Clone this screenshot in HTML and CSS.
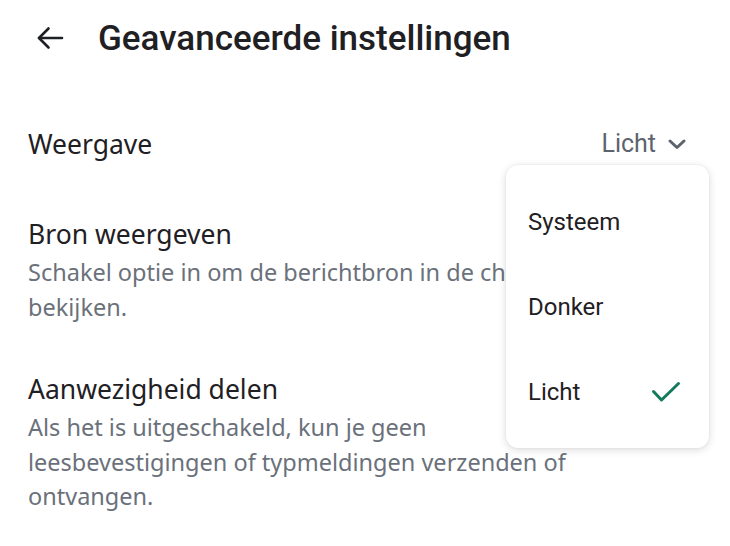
FILE: index.html
```html
<!DOCTYPE html>
<html lang="nl">
<head>
<meta charset="utf-8">
<title>Geavanceerde instellingen</title>
<link rel="stylesheet" href="styles.css">
</head>
<body>
<div class="screen">
  <header class="topbar">
    <button class="back" aria-label="Terug">
      <svg width="28" height="24" viewBox="0 0 28 24" fill="none" stroke="#1f2024" stroke-width="2.6" stroke-linecap="round" stroke-linejoin="round">
        <path d="M26 12H3"/>
        <path d="M12.5 2.5L3 12l9.5 9.5"/>
      </svg>
    </button>
    <h1 class="title">Geavanceerde instellingen</h1>
  </header>

  <main class="list">
    <div class="row row-select">
      <div class="row-title">Weergave</div>
      <div class="select">
        <span>Licht</span>
        <svg width="20" height="14" viewBox="0 0 20 14" fill="none" stroke="#5c636d" stroke-width="3" stroke-linecap="round" stroke-linejoin="round">
          <path d="M3 4l7 6.5L17 4"/>
        </svg>
      </div>
    </div>

    <div class="row">
      <div class="row-title">Bron weergeven</div>
      <div class="row-desc">Schakel optie in om de berichtbron in de chat te bekijken.</div>
    </div>

    <div class="row">
      <div class="row-title">Aanwezigheid delen</div>
      <div class="row-desc">Als het is uitgeschakeld, kun je geen leesbevestigingen of typmeldingen verzenden of ontvangen.</div>
    </div>
  </main>

  <div class="menu" role="menu">
    <div class="menu-item">Systeem</div>
    <div class="menu-item">Donker</div>
    <div class="menu-item">
      <span>Licht</span>
      <svg width="30" height="22" viewBox="0 0 30 22" fill="none" stroke="#137a5c" stroke-width="3" stroke-linecap="round" stroke-linejoin="round">
        <path d="M2.5 10.5l8 8.5L27.5 2.5"/>
      </svg>
    </div>
  </div>
</div>
</body>
</html>
```

FILE: styles.css
```css
* { box-sizing: border-box; }

html, body {
  margin: 0;
  padding: 0;
  background: #ffffff;
}

body {
  font-family: Roboto, "Noto Sans", "Liberation Sans", sans-serif;
  color: #1f2024;
}

.screen {
  position: relative;
  width: 730px;
  height: 546px;
  overflow: hidden;
}

.topbar {
  height: 76px;
  display: flex;
  align-items: center;
  padding-left: 36px;
}

.back {
  display: flex;
  align-items: center;
  justify-content: center;
  width: 28px;
  height: 24px;
  padding: 0;
  margin: 0 34px 0 0;
  border: none;
  background: none;
}

.title {
  margin: 0;
  font-size: 35px;
  font-weight: 500;
  color: #1f2024;
}

.list {
  padding-top: 27px;
}

.row {
  padding: 24px 43px 24px 28px;
}

.row-select {
  padding-bottom: 32px;
  display: flex;
  align-items: center;
  justify-content: space-between;
}

.row-title {
  font-family: "Noto Sans", Roboto, sans-serif;
  font-size: 26.5px;
  line-height: 34px;
  color: #1f2024;
}

.row-desc {
  font-family: "Noto Sans", Roboto, sans-serif;
  margin-top: 4px;
  font-size: 23.5px;
  line-height: 34.5px;
  color: #6a717b;
  max-width: 565px;
}

.select {
  display: flex;
  align-items: center;
  gap: 11px;
  font-size: 25px;
  line-height: 34px;
  color: #5c636d;
}

.menu {
  position: absolute;
  left: 506px;
  top: 165px;
  width: 203px;
  padding: 14px 0;
  background: #ffffff;
  border-radius: 12px;
  box-shadow: 0 2px 8px rgba(0, 0, 0, 0.14), 0 0 2px rgba(0, 0, 0, 0.08);
}

.menu-item {
  height: 85px;
  display: flex;
  align-items: center;
  justify-content: space-between;
  padding: 0 28px 0 22px;
  font-size: 24px;
  color: #1f2024;
}
```
